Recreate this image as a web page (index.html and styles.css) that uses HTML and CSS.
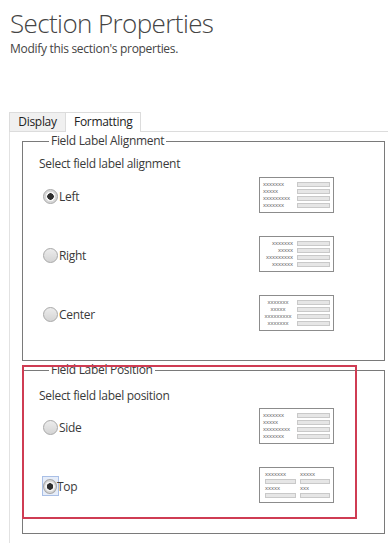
FILE: index.html
```html
<!DOCTYPE html>
<html lang="en">
<head>
    <meta charset="UTF-8">
    <title>Section Properties</title>
    <meta name="viewport" content="width=device-width, initial-scale=1">
    <link rel="stylesheet" href="styles.css">
</head>
<body>
<div class="head">
    <h1>Section Properties</h1>
    <p>Modify this section's properties.</p>
</div>
<div class="tabs">
    <span class="tab">Display</span>
    <span class="tab active">Formatting</span>
</div>
<div class="panel">
    <fieldset class="group">
        <legend>Field Label Alignment</legend>
        <p class="hint">Select field label alignment</p>
        <div class="option">
            <label class="choice"><span class="radio checked"></span>Left</label>
            <div class="preview">
                <span class="txt">xxxxxxx</span><span class="bar"></span>
                <span class="txt">xxxxx</span><span class="bar"></span>
                <span class="txt">xxxxxxxxx</span><span class="bar"></span>
                <span class="txt">xxxxxxx</span><span class="bar"></span>
            </div>
        </div>
        <div class="option">
            <label class="choice"><span class="radio"></span>Right</label>
            <div class="preview right">
                <span class="txt">xxxxxxx</span><span class="bar"></span>
                <span class="txt">xxxxx</span><span class="bar"></span>
                <span class="txt">xxxxxxxxx</span><span class="bar"></span>
                <span class="txt">xxxxxxx</span><span class="bar"></span>
            </div>
        </div>
        <div class="option">
            <label class="choice"><span class="radio"></span>Center</label>
            <div class="preview center">
                <span class="txt">xxxxxxx</span><span class="bar"></span>
                <span class="txt">xxxxx</span><span class="bar"></span>
                <span class="txt">xxxxxxxxx</span><span class="bar"></span>
                <span class="txt">xxxxxxx</span><span class="bar"></span>
            </div>
        </div>
    </fieldset>
    <div class="marked">
        <fieldset class="group second">
            <legend>Field Label Position</legend>
            <p class="hint">Select field label position</p>
            <div class="option">
                <label class="choice"><span class="radio"></span>Side</label>
                <div class="preview">
                    <span class="txt">xxxxxxx</span><span class="bar"></span>
                    <span class="txt">xxxxx</span><span class="bar"></span>
                    <span class="txt">xxxxxxxxx</span><span class="bar"></span>
                    <span class="txt">xxxxxxx</span><span class="bar"></span>
                </div>
            </div>
            <div class="option">
                <label class="choice"><span class="focus"><span class="radio checked"></span></span>Top</label>
                <div class="preview top">
                    <span class="txt">xxxxxxx</span><span class="txt">xxxxx</span>
                    <span class="bar"></span><span class="bar"></span>
                    <span class="txt">xxxxx</span><span class="txt">xxx</span>
                    <span class="bar"></span><span class="bar"></span>
                </div>
            </div>
        </fieldset>
        <div class="highlight"></div>
    </div>
</div>
</body>
</html>
```

FILE: styles.css
```css
body {
  margin: 0;
  background: #fff;
  font-family: 'Open Sans', 'Noto Sans', Arial, sans-serif;
  color: #3a3a3a;
  font-size: 12px;
  letter-spacing: -0.3px;
}
.head {
  padding: 6px 10px 0;
}
.head h1 {
  margin: 0;
  font-size: 26px;
  line-height: 34px;
  font-weight: 300;
  letter-spacing: -0.6px;
  color: #444;
}
.head p {
  margin: 0;
  font-size: 12px;
  line-height: 18px;
  color: #444;
}
.tabs {
  display: flex;
  margin: 54px 0 0 9px;
  border-bottom: 1px solid #dcdcdc;
}
.tab {
  box-sizing: border-box;
  height: 19px;
  line-height: 17px;
  padding: 0 8px;
  width: 57px;
  text-align: center;
  background: #f0f0f0;
  border: 1px solid #dcdcdc;
  border-bottom: none;
  color: #222;
}
.tab.active {
  width: 75px;
  background: #fff;
  border-left: none;
  margin-bottom: -1px;
  height: 20px;
}
.panel {
  margin-left: 9px;
  border-left: 1px solid #e2e2e2;
  padding: 1px 3px 20px 12px;
}
.group {
  margin: 0;
  padding: 0 50px 29px 16px;
  border: 1px solid #7a7a7a;
  min-width: 0;
}
.group legend {
  margin-left: 10px;
  padding: 0 2px;
  font-size: 12px;
  line-height: 16px;
  color: #3a3a3a;
}
.hint {
  margin: 7px 0 5px;
  line-height: 16px;
}
.second .hint {
  margin: 10px 0 4px;
}
.second {
  padding-bottom: 30px;
}
.option {
  display: flex;
  align-items: center;
  justify-content: space-between;
  padding-left: 4px;
  margin-bottom: 23px;
}
.option:last-child {
  margin-bottom: 0;
}
.choice {
  display: flex;
  align-items: center;
  margin-top: 2px;
}
.radio {
  box-sizing: border-box;
  width: 15px;
  height: 15px;
  border-radius: 50%;
  border: 1px solid #a8a8a8;
  background: linear-gradient(#ececec, #d4d4d4);
  margin-right: 1px;
}
.radio.checked {
  background: radial-gradient(circle, #2f2f2f 0 3px, #f4f4f4 3.5px 4.5px, #d8d8d8 5px);
}
.focus {
  display: flex;
  align-items: center;
  box-sizing: border-box;
  width: 17px;
  height: 20px;
  margin-left: -1px;
  margin-right: -2px;
  border: 1px solid #a9bfe6;
  background: #e6edf9;
}
.marked {
  position: relative;
  margin-top: 1px;
}
.highlight {
  position: absolute;
  top: 3px;
  left: 0;
  width: 335px;
  height: 154px;
  box-sizing: border-box;
  border: 2px solid #cf3c53;
}
.preview {
  box-sizing: border-box;
  width: 75px;
  height: 36px;
  border: 1px solid #8c8c8c;
  background: #fff;
  padding: 3px;
  display: grid;
  grid-template-columns: 1fr 33px;
  grid-auto-rows: 7px;
  column-gap: 4px;
  align-items: center;
}
.preview.top {
  grid-template-columns: 31px 30px;
  padding-left: 5px;
}
.txt {
  font-family: 'Liberation Sans', Arial, sans-serif;
  font-size: 6px;
  line-height: 7px;
  letter-spacing: 0;
  color: #666;
  white-space: nowrap;
}
.right .txt { text-align: right; }
.center .txt { text-align: center; }
.bar {
  display: block;
  box-sizing: border-box;
  height: 5px;
  background: #e6e6e6;
  border: 1px solid #c9c9c9;
}
```
